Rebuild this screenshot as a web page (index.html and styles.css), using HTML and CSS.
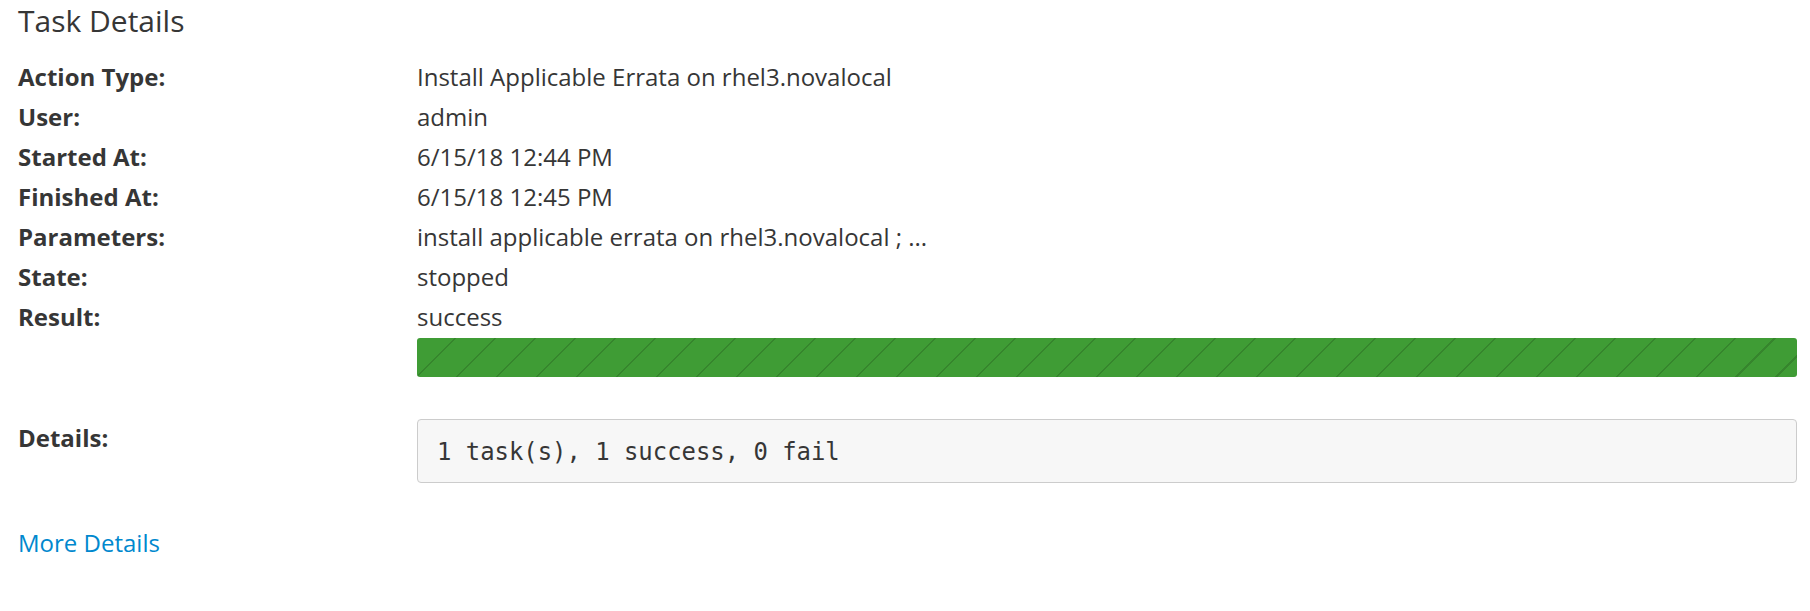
FILE: index.html
```html
<!DOCTYPE html>
<html>
<head>
<meta charset="utf-8">
<link rel="stylesheet" href="styles.css">
</head>
<body>
<div class="page">
  <h2 class="title">Task Details</h2>
  <dl class="details">
    <dt>Action Type:</dt>
    <dd>Install Applicable Errata on rhel3.novalocal</dd>
    <dt>User:</dt>
    <dd>admin</dd>
    <dt>Started At:</dt>
    <dd>6/15/18 12:44 PM</dd>
    <dt>Finished At:</dt>
    <dd>6/15/18 12:45 PM</dd>
    <dt>Parameters:</dt>
    <dd>install applicable errata on rhel3.novalocal ; ...</dd>
    <dt>State:</dt>
    <dd>stopped</dd>
    <dt>Result:</dt>
    <dd class="result">success
      <div class="progress"><div class="progress-bar" style="width: 100%"></div></div>
    </dd>
    <dt>Details:</dt>
    <dd><pre class="output">1 task(s), 1 success, 0 fail</pre></dd>
  </dl>
  <a class="more" href="#">More Details</a>
</div>
</body>
</html>
```
FILE: styles.css
```css
html, body {
  margin: 0;
  padding: 0;
  background: #ffffff;
}
.page {
  padding: 0 13px 0 18px;
  font-family: "Open Sans", "Noto Sans", sans-serif;
  font-size: 24px;
  line-height: 40px;
  color: #363636;
}
.title {
  margin: 1px 0 16px 0;
  font-size: 30px;
  font-weight: 400;
  line-height: 40px;
  color: #363636;
}
.details {
  display: grid;
  grid-template-columns: 399px 1fr;
  margin: 0;
}
.details dt {
  font-weight: 700;
  margin: 0;
}
.details dd {
  margin: 0;
}
.result {
  margin-bottom: 41px !important;
}
.progress {
  margin-top: 1px;
  height: 39px;
  border-radius: 3px;
  overflow: hidden;
  background: #ededed;
}
.progress-bar {
  height: 100%;
  background-color: #3f9c35;
  background-image: repeating-linear-gradient(135deg, transparent 0, transparent 26.3px, rgba(0, 0, 0, 0.15) 26.3px, rgba(0, 0, 0, 0.15) 28.28px);
}
.output {
  margin: 1px 0 0 0;
  padding: 18px 19px 16px 19px;
  border: 1px solid #cccccc;
  border-radius: 4px;
  background: #f7f7f7;
  font-family: "DejaVu Sans Mono", "Liberation Mono", monospace;
  font-size: 23.9px;
  line-height: 28px;
  color: #363636;
}
.more {
  display: block;
  margin-top: 40px;
  color: #0088ce;
  text-decoration: none;
  width: max-content;
}
```
